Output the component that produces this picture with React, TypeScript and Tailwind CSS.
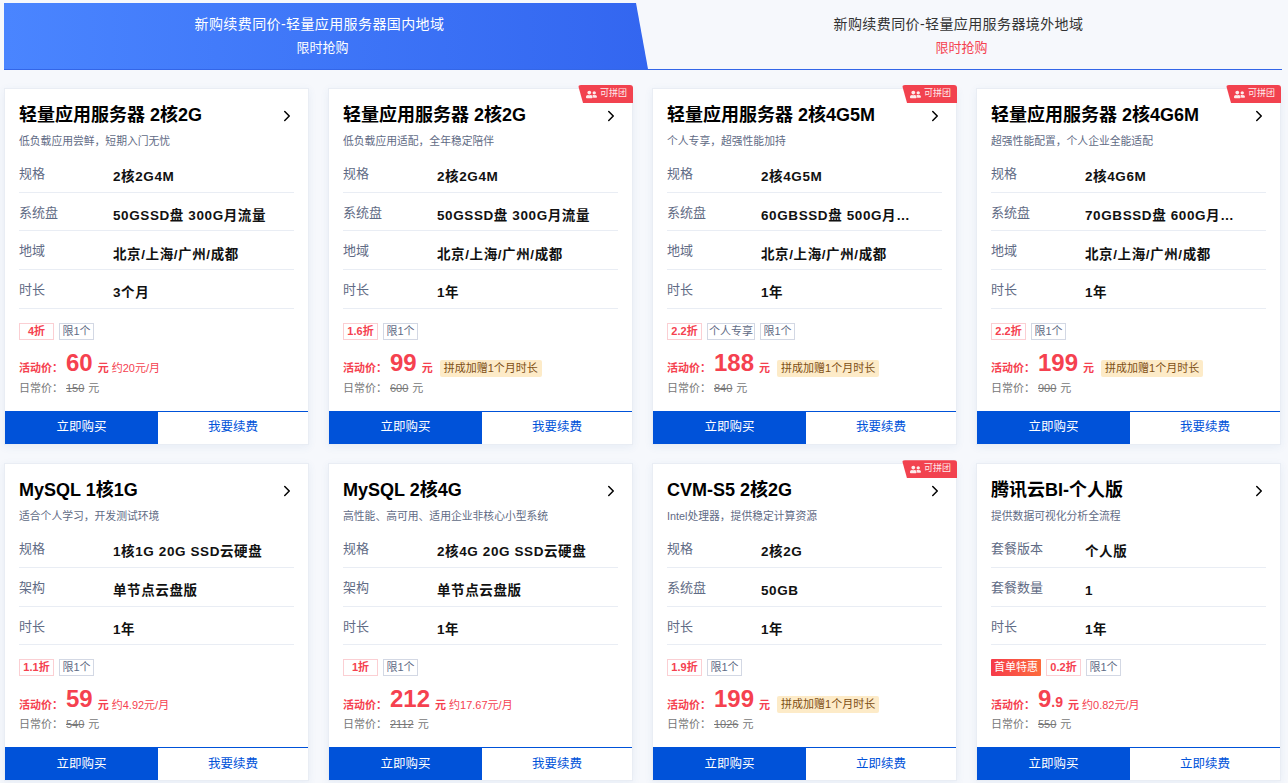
import React from "react";
import { ChevronRight } from "lucide-react";
import { FaUserFriends } from "react-icons/fa";

interface Plan {
  title: string;
  desc: string;
  specs: [string, string][];
  tags: string[];
  first?: boolean;
  price: string;
  frac?: string;
  monthly?: string;
  group?: boolean;
  normal: string;
  second: string;
}

const plans: Plan[] = [
  {
    title: "轻量应用服务器 2核2G",
    desc: "低负载应用尝鲜，短期入门无忧",
    specs: [["规格", "2核2G4M"], ["系统盘", "50GSSD盘 300G月流量"], ["地域", "北京/上海/广州/成都"], ["时长", "3个月"]],
    tags: ["4折", "限1个"],
    price: "60",
    monthly: "约20元/月",
    normal: "150",
    second: "我要续费",
  },
  {
    title: "轻量应用服务器 2核2G",
    desc: "低负载应用适配，全年稳定陪伴",
    specs: [["规格", "2核2G4M"], ["系统盘", "50GSSD盘 300G月流量"], ["地域", "北京/上海/广州/成都"], ["时长", "1年"]],
    tags: ["1.6折", "限1个"],
    price: "99",
    group: true,
    normal: "600",
    second: "我要续费",
  },
  {
    title: "轻量应用服务器 2核4G5M",
    desc: "个人专享，超强性能加持",
    specs: [["规格", "2核4G5M"], ["系统盘", "60GBSSD盘 500G月流量"], ["地域", "北京/上海/广州/成都"], ["时长", "1年"]],
    tags: ["2.2折", "个人专享", "限1个"],
    price: "188",
    group: true,
    normal: "840",
    second: "我要续费",
  },
  {
    title: "轻量应用服务器 2核4G6M",
    desc: "超强性能配置，个人企业全能适配",
    specs: [["规格", "2核4G6M"], ["系统盘", "70GBSSD盘 600G月流量"], ["地域", "北京/上海/广州/成都"], ["时长", "1年"]],
    tags: ["2.2折", "限1个"],
    price: "199",
    group: true,
    normal: "900",
    second: "我要续费",
  },
  {
    title: "MySQL 1核1G",
    desc: "适合个人学习，开发测试环境",
    specs: [["规格", "1核1G 20G SSD云硬盘"], ["架构", "单节点云盘版"], ["时长", "1年"]],
    tags: ["1.1折", "限1个"],
    price: "59",
    monthly: "约4.92元/月",
    normal: "540",
    second: "我要续费",
  },
  {
    title: "MySQL 2核4G",
    desc: "高性能、高可用、适用企业非核心小型系统",
    specs: [["规格", "2核4G 20G SSD云硬盘"], ["架构", "单节点云盘版"], ["时长", "1年"]],
    tags: ["1折", "限1个"],
    price: "212",
    monthly: "约17.67元/月",
    normal: "2112",
    second: "我要续费",
  },
  {
    title: "CVM-S5 2核2G",
    desc: "Intel处理器，提供稳定计算资源",
    specs: [["规格", "2核2G"], ["系统盘", "50GB"], ["时长", "1年"]],
    tags: ["1.9折", "限1个"],
    price: "199",
    group: true,
    normal: "1026",
    second: "立即续费",
  },
  {
    title: "腾讯云BI-个人版",
    desc: "提供数据可视化分析全流程",
    specs: [["套餐版本", "个人版"], ["套餐数量", "1"], ["时长", "1年"]],
    tags: ["0.2折", "限1个"],
    first: true,
    price: "9",
    frac: ".9",
    monthly: "约0.82元/月",
    normal: "550",
    second: "立即续费",
  },
];

function Card({ plan }: { plan: Plan }) {
  return (
    <div className="relative flex flex-col border border-[#e9edf4] bg-white shadow-[0_2px_8px_rgba(55,99,170,0.08)]">
      {plan.group && (
        <div className="absolute right-[-1px] top-[-4px] flex h-[18px] w-[55px] items-center gap-[3px] rounded-t-[3px] bg-[#f2424f] pl-[8px] text-[9px] text-[#fdecec] [clip-path:polygon(0_0,100%_0,100%_100%,5px_100%)]">
          <FaUserFriends size={11} />
          <span>可拼团</span>
        </div>
      )}
      <div className="flex flex-1 flex-col px-[14px]">
        <div className="mt-[14px] flex h-[25px] items-center justify-between">
          <span className="text-[18px] leading-[25px] font-bold text-black">{plan.title}</span>
          <ChevronRight size={18} strokeWidth={2} className="mr-[-2px] text-black" />
        </div>
        <p className="mt-[5px] h-[16px] text-[10.8px] leading-[16px] text-[#5f6b85]">{plan.desc}</p>
        <div className="mt-[5px]">
          {plan.specs.map(([label, value]) => (
            <div key={label} className="flex h-[38.67px] items-center border-b border-[#e9edf4] pt-[5px] text-[13px]">
              <span className="mb-[3px] w-[94px] shrink-0 text-[#5f6b85]">{label}</span>
              <span className="mt-[4px] w-[155px] truncate text-[13.5px] font-bold tracking-[0.6px] text-[#111]">{value}</span>
            </div>
          ))}
        </div>
        <div className="mt-[14px] flex h-[17px] gap-[5px]">
          {plan.first && (
            <span className="flex w-[50px] items-center justify-center rounded-[1px] bg-gradient-to-r from-[#f6394a] to-[#fc6a3c] text-[11px] text-white">
              首单特惠
            </span>
          )}
          {plan.tags.map((tag) =>
            tag.endsWith("折") ? (
              <span key={tag} className="flex min-w-[35px] items-center justify-center border border-[#fbcfd3] text-[11px] font-bold text-[#f5414f]">
                {tag}
              </span>
            ) : (
              <span key={tag} className="flex min-w-[35px] items-center justify-center border border-[#d3d8e4] px-[1px] text-[11px] text-[#5f6b85]">
                {tag}
              </span>
            )
          )}
        </div>
        <div className="mt-[10px] flex h-[28px] items-end text-[#f5414f]">
          <span className="w-[47px] pb-[1px] text-[11px] font-bold">活动价：</span>
          <span className="text-[24px] leading-[30px] font-bold">{plan.price}</span>
          {plan.frac && <span className="pb-[1px] text-[14px] font-bold">{plan.frac}</span>}
          <span className="ml-[5px] pb-[1px] text-[11px] font-bold">元</span>
          {plan.monthly && <span className="ml-[3px] pb-[1px] text-[11px]">{plan.monthly}</span>}
          {plan.group && (
            <span className="mb-[1px] ml-[7px] rounded-[2px] bg-[#fdebc8] px-[4px] text-[11px] leading-[17px] text-[#7d4f14]">
              拼成加赠1个月时长
            </span>
          )}
        </div>
        <div className="mt-[2px] flex text-[11px] leading-[16px] text-[#777]">
          <span className="w-[47px]">日常价：</span>
          <span className="line-through">{plan.normal}</span>
          <span className="ml-[4px]">元</span>
        </div>
      </div>
      <div className="mt-[15px] flex h-[33px] border-t border-[#0052d9] text-[12.5px]">
        <div className="flex w-[153px] items-center justify-center bg-[#0052d9] text-white">立即购买</div>
        <div className="flex flex-1 items-center justify-center text-[#0052d9]">{plan.second}</div>
      </div>
    </div>
  );
}

export default function App() {
  return (
    <div className="h-[783px] overflow-hidden bg-[#f6f8fc] pt-[3px] font-['Liberation_Sans','Noto_Sans_CJK_SC',sans-serif]">
      <div className="ml-[4px] flex h-[67px] w-[1278px] border-b border-[#3366e8] text-[14px] leading-[23px]">
        <div className="flex w-[644px] flex-col items-center justify-center bg-gradient-to-r from-[#4a85ff] to-[#3366f0] pr-[13px] text-white [clip-path:polygon(0_0,632px_0,100%_100%,0_100%)]">
          <span className="tracking-[0.4px]">新购续费同价-轻量应用服务器国内地域</span>
          <span className="ml-[6px] text-[13px]">限时抢购</span>
        </div>
        <div className="ml-[-13px] flex flex-1 flex-col items-center justify-center">
          <span className="tracking-[0.4px] text-[#333]">新购续费同价-轻量应用服务器境外地域</span>
          <span className="ml-[6px] text-[13px] text-[#f5414f]">限时抢购</span>
        </div>
      </div>
      <div className="mt-[18px] ml-[4px] grid w-[1277px] grid-cols-4 gap-x-[19px] gap-y-[18.6px]">
        {plans.map((plan, i) => (
          <Card key={i} plan={plan} />
        ))}
      </div>
    </div>
  );
}
